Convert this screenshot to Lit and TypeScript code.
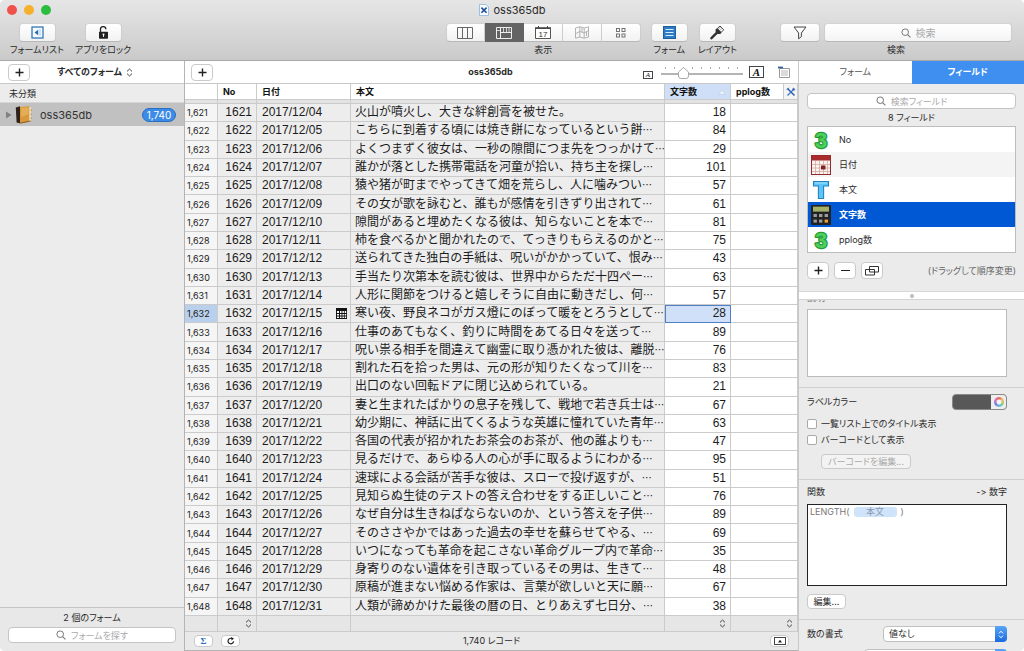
import { LitElement, html, css, svg, nothing } from "lit";
import { customElement, state } from "lit/decorators.js";
import { classMap } from "lit/directives/class-map.js";

type Row = { no: number; date: string; text: string; count: number };

const ENTRIES: [string, number][] = [
  ["火山が噴火し、大きな絆創膏を被せた。", 18],
  ["こちらに到着する頃には焼き餅になっているという餅…", 84],
  ["よくつまずく彼女は、一秒の隙間につま先をつっかけて…", 29],
  ["誰かが落とした携帯電話を河童が拾い、持ち主を探し…", 101],
  ["猿や猪が町までやってきて畑を荒らし、人に噛みつい…", 57],
  ["その女が歌を詠むと、誰もが感情を引きずり出されて…", 61],
  ["隙間があると埋めたくなる彼は、知らないことを本で…", 81],
  ["柿を食べるかと聞かれたので、てっきりもらえるのかと…", 75],
  ["送られてきた独白の手紙は、呪いがかかっていて、恨み…", 43],
  ["手当たり次第本を読む彼は、世界中からただ十四ペー…", 63],
  ["人形に関節をつけると嬉しそうに自由に動きだし、何…", 57],
  ["寒い夜、野良ネコがガス燈にのぼって暖をとろうとして…", 28],
  ["仕事のあてもなく、釣りに時間をあてる日々を送って…", 89],
  ["呪い祟る相手を間違えて幽霊に取り憑かれた彼は、離脱…", 76],
  ["割れた石を拾った男は、元の形が知りたくなって川を…", 83],
  ["出口のない回転ドアに閉じ込められている。", 21],
  ["妻と生まれたばかりの息子を残して、戦地で若き兵士は…", 67],
  ["幼少期に、神話に出てくるような英雄に憧れていた青年…", 63],
  ["各国の代表が招かれたお茶会のお茶が、他の誰よりも…", 47],
  ["見るだけで、あらゆる人の心が手に取るようにわかる…", 95],
  ["速球による会話が苦手な彼は、スローで投げ返すが、…", 51],
  ["見知らぬ生徒のテストの答え合わせをする正しいこと…", 76],
  ["なぜ自分は生きねばならないのか、という答えを子供…", 89],
  ["そのささやかではあった過去の幸せを蘇らせてやる、…", 69],
  ["いつになっても革命を起こさない革命グループ内で革命…", 35],
  ["身寄りのない遺体を引き取っているその男は、生きて…", 48],
  ["原稿が進まない悩める作家は、言葉が欲しいと天に願…", 67],
  ["人類が諦めかけた最後の暦の日、とりあえず七日分、…", 38],
];

const ROWS: Row[] = ENTRIES.map(([text, count], i) => ({
  no: 1621 + i,
  date: `2017/12/${String(4 + i).padStart(2, "0")}`,
  text,
  count,
}));

const searchIcon = html`<svg class="lens" width="10" height="10" viewBox="0 0 10 10" aria-hidden="true">
  <circle cx="4.2" cy="4.2" r="3.3" fill="none" stroke="#777" stroke-width="1"/>
  <path d="M6.6 6.6L9.4 9.4" stroke="#777" stroke-width="1.1"/></svg>`;

const updown = html`<svg width="7" height="9" viewBox="0 0 7 9" aria-hidden="true">
  <path d="M1 3.4L3.5 1L6 3.4M1 5.6L3.5 8L6 5.6" fill="none" stroke="#444" stroke-width="1"/></svg>`;

const plus = html`<svg width="9" height="9" viewBox="0 0 9 9" aria-hidden="true">
  <path d="M4.5 0.5V8.5M0.5 4.5H8.5" stroke="#222" stroke-width="1.4"/></svg>`;

const icons = {
  formList: html`<svg width="13" height="13" viewBox="0 0 13 13"><rect x="1" y="1" width="11" height="11" fill="#f4faff" stroke="#3577b5" stroke-width="1.3"/><path d="M3.5 6.5L7.2 3.8V9.2Z" fill="#2a68a8"/><path d="M9 3V10" stroke="#b8d8f2" stroke-width="1.4"/></svg>`,
  lock: html`<svg width="11" height="14" viewBox="0 0 11 14"><path d="M2.5 6V3.6A2.7 2.7 0 0 1 7.9 3.2" fill="none" stroke="#222" stroke-width="1.3"/><rect x="1" y="5.8" width="9" height="7" rx="0.8" fill="#222"/><circle cx="5.5" cy="8.6" r="1" fill="#fff"/><path d="M5.5 8.6V11" stroke="#fff" stroke-width="0.9"/></svg>`,
  columns: html`<svg width="16" height="12" viewBox="0 0 16 12"><path d="M0.5 0.5H15.5V11.5H0.5ZM5.5 0.5V11.5M10.5 0.5V11.5" fill="none" stroke="#666"/></svg>`,
  sheet: html`<svg width="16" height="12" viewBox="0 0 16 12"><path d="M0.5 0.5H15.5V11.5H0.5ZM4.5 0.5V11.5M4.5 5.5H15.5" fill="none" stroke="#eee"/><path d="M7.5 1V5M10.5 1V5M13 1V5M1 3.5H4" stroke="#ddd" stroke-width="0.9"/></svg>`,
  calendar: html`<svg width="16" height="13" viewBox="0 0 16 13"><path d="M0.5 2.5H15.5V12.5H0.5Z" fill="#fff" stroke="#555"/><path d="M0 2H16" stroke="#444" stroke-width="1.6"/><path d="M3.5 0V2M12.5 0V2" stroke="#444"/><text x="8" y="10.8" text-anchor="middle" font-size="8" font-family="Liberation Sans, sans-serif" fill="#333">17</text></svg>`,
  map: html`<svg width="14" height="13" viewBox="0 0 14 13"><path d="M0.5 2L4.8 0.8L9.2 2L13.5 0.8V11L9.2 12.2L4.8 11L0.5 12.2ZM4.8 0.8V11M9.2 2V12.2M1 7.5L4.8 5.5L9.2 7L13.5 4.5M7 2V6M11.5 5.5V10" fill="none" stroke="#aaa" stroke-width="0.9"/></svg>`,
  grid: html`<svg width="10" height="10" viewBox="0 0 10 10"><g fill="none" stroke="#666" stroke-width="0.9"><rect x="0.5" y="0.5" width="3" height="3"/><rect x="6" y="0.5" width="3" height="3"/><rect x="0.5" y="6" width="3" height="3"/><rect x="6" y="6" width="3" height="3"/></g></svg>`,
  form: html`<svg width="13" height="13" viewBox="0 0 13 13"><rect x="0.5" y="0.5" width="12" height="12" fill="#2d7cc4" stroke="#1f5f9e"/><path d="M2.5 3.5H10.5M2.5 6.5H10.5M2.5 9.5H10.5" stroke="#d9ecfb" stroke-width="1.1"/></svg>`,
  brush: html`<svg width="16" height="15" viewBox="0 0 16 15"><path d="M8.2 3.6L11 1L14.8 4.8L12 7.4Z" fill="#fff" stroke="#333" stroke-width="0.9"/><path d="M12 2L13 3M13.2 3.2L11 5.4M11.8 1.8L9.6 4" stroke="#555" stroke-width="0.6"/><path d="M6.6 4.2L8.2 3.2L12.4 7.4L11.4 9L8.4 9L3 14.2C1.8 14.8 0.8 13.8 1.4 12.6L6.6 7.2Z" fill="#333"/></svg>`,
  funnel: html`<svg width="14" height="14" viewBox="0 0 14 14"><path d="M1 1H13L8.4 7V10.6L5.6 12.8V7Z" fill="none" stroke="#444" stroke-width="1"/></svg>`,
  doc: html`<svg width="10" height="12" viewBox="0 0 10 12"><path d="M0.5 0.5H7L9.5 3V11.5H0.5Z" fill="#f7fbff" stroke="#9dbfe0"/><path d="M2.4 3.6L7.6 8.8M7.6 3.6L2.4 8.8" stroke="#1e4e94" stroke-width="1.6"/></svg>`,
  note: html`<svg width="13" height="12" viewBox="0 0 13 12"><path d="M2.5 2.5H12.5V11.5H2.5Z" fill="#fff" stroke="#999"/><path d="M1 1.5H6" stroke="#35629c" stroke-width="1.8"/><path d="M4 5H11M4 7H11M4 9H11" stroke="#999" stroke-width="0.7"/></svg>`,
  tools: html`<svg width="10" height="10" viewBox="0 0 10 10"><path d="M1.5 1.5L8.5 8.5" stroke="#2d5fae" stroke-width="1.5"/><path d="M8.5 1.5L1.5 8.5" stroke="#3f74c4" stroke-width="1.3"/><path d="M0.8 2.8L2.8 0.8M7.2 0.8L7 3L9.2 2.8" stroke="#2d5fae" fill="none"/></svg>`,
  book: html`<svg width="18" height="20" viewBox="0 0 18 20"><path d="M3 2.2L14.5 1V16.5L4.6 18.6L2.4 17Z" fill="#d9993a"/><path d="M0.8 2.4L5 1.2V18.2L1.6 17.4Z" fill="#2e2018"/><path d="M14.5 1.8L15.8 2.4V16L14.5 16.5Z" fill="#f2ead6"/><path d="M5 18.2L14.5 16.2L15.8 16" stroke="#8b5a1c" fill="none"/><path d="M6.2 3L13.5 2.2V9L6.2 12Z" fill="#e9b660" opacity="0.7"/><path d="M16.2 4.5V6M16.2 8.5V10M16.2 12.5V14" stroke="#d0962f" stroke-width="1.2"/></svg>`,
  minical: html`<svg class="minical" width="11" height="11" viewBox="0 0 11 11"><rect width="11" height="11" fill="#111"/><g fill="#fff"><path d="M1 3h2v2h-2zM4 3h1.5v2H4zM6.4 3h1.5v2H6.4zM8.7 3h1.5v2H8.7zM1 6h2v1.6H1zM4 6h1.5v1.6H4zM6.4 6h1.5v1.6H6.4zM8.7 6h1.5v1.6H8.7zM1 8.5h2V10H1zM4 8.5h1.5V10H4zM6.4 8.5h1.5V10H6.4zM8.7 8.5h1.5V10H8.7z"/></g></svg>`,
  number: html`<svg width="20" height="22" viewBox="0 0 20 22"><text x="10" y="18.5" text-anchor="middle" font-family="Liberation Sans, sans-serif" font-weight="bold" font-size="22" fill="#4fd05a" stroke="#229a3a" stroke-width="2.4" stroke-linejoin="round" paint-order="stroke">3</text></svg>`,
  date: html`<svg width="20" height="20" viewBox="0 0 20 20"><rect x="0.5" y="0.5" width="19" height="19" fill="#fbf1ee" stroke="#8e2a2a"/><rect x="0.5" y="0.5" width="19" height="5" fill="#a82c2c"/><path d="M4.5 6V19M8.5 6V19M12.5 6V19M16.5 6V19M1 9.5H19M1 13H19M1 16.5H19" stroke="#cfa9a0" stroke-width="0.8"/><rect x="10" y="10.5" width="4.5" height="4" fill="#7e2323"/></svg>`,
  text: html`<svg width="18" height="20" viewBox="0 0 18 20"><path d="M1.5 1.5H16.5V6H11.6V18.5H6.4V6H1.5Z" fill="#5cc4f6" stroke="#2384bd" stroke-width="1.1"/><path d="M3 3H15" stroke="#a5e2ff"/></svg>`,
  calc: html`<svg width="20" height="20" viewBox="0 0 20 20"><rect width="20" height="20" rx="1" fill="#222"/><rect x="2" y="1.6" width="16" height="5" fill="#a3b168"/><g fill="#9b9b9b"><rect x="2.5" y="9" width="3.4" height="3"/><rect x="8" y="9" width="3.4" height="3"/><rect x="13.6" y="9" width="3.4" height="3"/><rect x="2.5" y="14.6" width="3.4" height="3"/><rect x="8" y="14.6" width="3.4" height="3"/></g><rect x="13.6" y="14.6" width="3.4" height="3" fill="#f0a236"/></svg>`,
  copy: html`<svg width="14" height="10" viewBox="0 0 14 10"><path d="M4.5 0.5H13.5V6H4.5ZM0.5 3.5H9.5V9H0.5Z" fill="none" stroke="#333"/></svg>`,
  reload: html`<svg width="8" height="8" viewBox="0 0 8 8"><path d="M6.6 4.4A2.8 2.8 0 1 1 5 1.5" fill="none" stroke="#222" stroke-width="1.2"/><path d="M4 0L7 1.4L4.6 3.4Z" fill="#222"/></svg>`,
  panel: html`<svg width="12" height="8" viewBox="0 0 12 8"><rect x="0.5" y="0.5" width="11" height="7" fill="#fff" stroke="#444"/><path d="M4 5.4L6 2.8L8 5.4Z" fill="#222"/></svg>`,
};

const letterBox = (w: number, h: number, size: number) => html`<svg width=${w} height=${h} viewBox="0 0 ${w} ${h}" aria-hidden="true">
  ${svg`<rect x="0.5" y="0.5" width=${w - 1} height=${h - 1} fill="#fff" stroke="#444"/>
  <text x=${w / 2} y=${h / 2 + size / 3} text-anchor="middle" font-family="Liberation Serif, serif" font-style="italic" font-weight=${size > 8 ? "bold" : "normal"} font-size=${size} fill="#111">A</text>`}</svg>`;

const shared = css`
  :host { font-family: Inter, "Noto Sans CJK JP", sans-serif; font-size: 9px; line-height: 12px; color: #2a2a2a; font-feature-settings: "palt", "calt" 0; }
  * { box-sizing: border-box; }
  svg { display: block; flex: none; }
  button, input, select, textarea { font: inherit; color: inherit; font-feature-settings: inherit; margin: 0; }
  button { display: flex; align-items: center; justify-content: center; padding: 0; border: 1px solid #cacaca; border-radius: 4px; background: #fff; }
  .add { width: 22px; height: 17px; }
  .search { display: flex; align-items: center; justify-content: center; gap: 5px; background: #fff; border: 1px solid #c4c4c4; border-radius: 4px; }
  .search input { field-sizing: content; border: 0; padding: 0; background: none; outline: none; height: 12px; }
  .search input::placeholder { color: #aaa; opacity: 1; }
`;

@customElement("tool-bar")
class ToolBar extends LitElement {
  static styles = [shared, css`
    :host { display: block; height: 60px; background: linear-gradient(#e6e6e6, #cacaca); border-bottom: 1px solid #a8a8a8; }
    .title { display: grid; grid-template-columns: 1fr auto 1fr; align-items: center; height: 19px; padding: 0 7px; }
    .lights { display: flex; gap: 7px; }
    .light { width: 10px; height: 10px; border-radius: 50%; }
    .red { background: #f0524b; } .yellow { background: #f5b02e; } .green { background: #2bbd3d; }
    .name { display: flex; gap: 5px; align-items: center; font-size: 11px; }
    .items { display: flex; padding: 4px 12px 0 8px; }
    .item { display: flex; flex-direction: column; align-items: center; gap: 2px; }
    .left { display: flex; gap: 8px; }
    .left .item { min-width: 58px; }
    .middle { display: flex; gap: 10px; margin-left: auto; }
    .right { margin-left: 43px; }
    button { width: 37px; height: 19px; border-color: #d4d4d4 #cdcdcd #b8b8b8; background: linear-gradient(#fff, #f2f2f2); }
    .segments { display: flex; }
    .segments button { width: 39px; border-radius: 0; border-left-width: 0; }
    .segments button:first-child { border-radius: 4px 0 0 4px; border-left-width: 1px; }
    .segments button:last-child { border-radius: 0 4px 4px 0; }
    .segments .on { background: #636363; border-color: #636363; }
    .find { display: flex; gap: 4px; }
    .find button { width: 40px; }
    .find .search { width: 188px; height: 19px; border-color: #d4d4d4 #cdcdcd #b8b8b8; background: linear-gradient(#fff, #f4f4f4); }
    .find input { font-size: 10px; height: 14px; }
  `];
  render() {
    return html`
      <div class="title">
        <div class="lights"><span class="light red"></span><span class="light yellow"></span><span class="light green"></span></div>
        <div class="name">${icons.doc}<span>oss365db</span></div>
      </div>
      <div class="items">
        <div class="left">
          <div class="item"><button aria-labelledby="l1">${icons.formList}</button><span id="l1">フォームリスト</span></div>
          <div class="item"><button aria-labelledby="l2">${icons.lock}</button><span id="l2">アプリをロック</span></div>
        </div>
        <div class="middle">
          <div class="item">
            <div class="segments" role="group" aria-labelledby="l3">
              <button aria-label="columns">${icons.columns}</button><button class="on" aria-label="sheet">${icons.sheet}</button>
              <button aria-label="calendar">${icons.calendar}</button><button aria-label="map">${icons.map}</button><button aria-label="grid">${icons.grid}</button>
            </div><span id="l3">表示</span></div>
          <div class="item"><button aria-labelledby="l4">${icons.form}</button><span id="l4">フォーム</span></div>
          <div class="item"><button aria-labelledby="l5">${icons.brush}</button><span id="l5">レイアウト</span></div>
        </div>
        <div class="item right">
          <div class="find"><button aria-label="filter">${icons.funnel}</button>
            <div class="search">${searchIcon}<input id="q" type="text" placeholder="検索"></div></div>
          <label for="q">検索</label>
        </div>
      </div>`;
  }
}

@customElement("form-list")
class FormList extends LitElement {
  static styles = [shared, css`
    :host { display: flex; flex-direction: column; background: #ececec; border-right: 1px solid #b4b4b4; }
    .head { display: flex; align-items: center; height: 23px; padding: 0 8px; background: #fff; border-bottom: 1px solid #c8c8c8; }
    .scope { margin: 0 auto; gap: 4px; border: 0; font-weight: bold; background: none; padding-right: 16px; }
    .group { padding: 4px 9px 2px; height: 19px; border-bottom: 1px solid #d6d6d6; }
    .entry { display: flex; align-items: center; height: 23px; padding: 0 8px 0 6px; background: #c1c1c1; font-size: 11px; color: #333; }
    .entry svg { margin-right: 3px; }
    .entry .label { margin-left: 4px; }
    .badge { margin-left: auto; width: 34px; text-align: center; color: #fff; background: #3c8be6; border: 1px solid #2a6fc0; border-radius: 8px; font-size: 10px; line-height: 12px; }
    .foot { margin-top: auto; border-top: 1px solid #c4c4c4; background: #e8e8e8; padding: 4px 8px 8px; text-align: center; height: 44px; display: flex; flex-direction: column; gap: 3px; }
    .foot .search { height: 16px; flex: none; }
  `];
  render() {
    return html`
      <div class="head"><button class="add" aria-label="add">${plus}</button><button class="scope">すべてのフォーム ${updown}</button></div>
      <div class="group">未分類</div>
      <div class="entry"><svg width="6" height="8" viewBox="0 0 6 8"><path d="M0 0.5L5.5 4L0 7.5Z" fill="#808080"/></svg>${icons.book}<span class="label">oss365db</span><span class="badge">1,740</span></div>
      <div class="foot"><span>2 個のフォーム</span><div class="search">${searchIcon}<input type="text" aria-label="フォームを探す" placeholder="フォームを探す"></div></div>`;
  }
}

@customElement("record-sheet")
class RecordSheet extends LitElement {
  static styles = [shared, css`
    :host { display: flex; flex-direction: column; min-width: 0; background: #e9e9e9; }
    .head { display: grid; grid-template-columns: 1fr auto 1fr; align-items: center; height: 23px; padding: 0 8px 0 6px; background: #fff; border-bottom: 1px solid #c8c8c8; }
    .head b { font-size: 9px; }
    .zoom { display: flex; justify-content: flex-end; align-items: center; }
    .zoom > svg:last-child { margin-left: 13px; }
    .small { align-self: flex-end; }
    input[type="range"] { appearance: none; width: 82px; height: 14px; margin: 0 6px 0 8px; outline: none;
      background: linear-gradient(#b4b4b4, #b4b4b4) 0 8px / 100% 2px no-repeat, repeating-linear-gradient(90deg, transparent 0 4px, #aaa 4px 5px, transparent 5px 9px) 0 2px / 100% 2px no-repeat; }
    input[type="range"]::-webkit-slider-thumb { appearance: none; width: 11px; height: 13px;
      background: url("data:image/svg+xml,%3Csvg xmlns='http://www.w3.org/2000/svg' width='11' height='13'%3E%3Cpath d='M5.5 1.5L10.5 6V10Q10.5 12.5 8 12.5H3Q.5 12.5 .5 10V6Z' fill='white' stroke='%23aaa'/%3E%3C/svg%3E"); }
    .area { flex: 1; min-height: 0; }
    table { width: 100%; height: 100%; table-layout: fixed; border-collapse: separate; border-spacing: 0; }
    th, td { padding: 0; border-right: 1px solid #cbcbcb; border-bottom: 1px solid #cbcbcb; white-space: nowrap; overflow: hidden; text-align: left; }
    th { height: 16px; line-height: 14px; background: #fff; padding-left: 5px; color: #111; }
    th.sorted { background: #cfdff7; }
    th .cell { display: flex; align-items: center; justify-content: space-between; height: 15px; }
    .tool { width: 14px; height: 15px; border-radius: 0; border-width: 0 0 0 1px; background: #f4f4f4; }
    .gap td { height: 4px; background: #e3e3e3; line-height: 1px; }
    tbody td { font-family: "Liberation Sans", "Noto Sans CJK JP", sans-serif; font-size: 12px; line-height: 17px; background: #ededed; font-feature-settings: normal; color: #1c1c1c; }
    tbody .idx { font-family: Inter, sans-serif; font-size: 9px; padding-left: 2px; background: #f5f5f5; }
    tbody .no, tbody .num { text-align: right; padding-right: 4px; }
    tbody .num, tbody .blank { background: #fff; }
    tbody .date { padding-left: 5px; }
    .date .cell { display: flex; justify-content: space-between; align-items: center; padding-right: 3px; }
    tbody .body { padding-left: 4px; }
    .more { font-size: 10px; font-family: "Noto Sans CJK JP", sans-serif; line-height: 1; }
    tbody .on .idx { background: #b9d0ed; }
    tbody .on .num { background: #cfe0f8; outline: 1px solid #4f7fc4; outline-offset: -1px; }
    tfoot td { height: 16px; background: #e6e6e6; }
    tfoot svg { margin: 0 4px 0 auto; }
    .foot { display: grid; grid-template-columns: 1fr auto 1fr; align-items: center; height: 19px; padding: 0 9px; border-bottom: 1px solid #b4b4b4; }
    .foot button { width: 19px; height: 12px; }
    .acts { display: flex; gap: 8px; }
    .foot .sum { color: #2d6fc0; font: bold 9px "Liberation Serif", serif; }
    .foot .show { justify-self: end; }
  `];
  @state() private selected = 1632;
  render() {
    return html`
      <div class="head">
        <button class="add" aria-label="add">${plus}</button><b>oss365db</b>
        <div class="zoom"><span class="small">${letterBox(10, 8, 7)}</span><input type="range" aria-label="zoom" min="0" max="100" value="24">${letterBox(15, 12, 11)}${icons.note}</div>
      </div>
      <div class="area"><table>
        <colgroup><col style="width:33px"><col style="width:39px"><col style="width:94px"><col><col style="width:66px"><col style="width:67px"></colgroup>
        <thead>
          <tr><th></th><th>No</th><th>日付</th><th>本文</th>
            <th class="sorted"><div class="cell">文字数<svg width="12" height="6" viewBox="0 0 12 6"><path d="M4 0.5L7.5 5.5H0.5Z" fill="#e9f0fb" stroke="#b9c9e4" stroke-width="0.6"/></svg></div></th>
            <th><div class="cell">pplog数<button class="tool" aria-label="tools">${icons.tools}</button></div></th></tr>
          <tr class="gap"><td></td><td></td><td></td><td></td><td></td><td></td></tr>
        </thead>
        <tbody>${ROWS.map((r) => {
          const on = r.no === this.selected;
          const cut = r.text.endsWith("…");
          return html`<tr class=${classMap({ on })} @click=${() => (this.selected = r.no)}>
            <td class="idx">${r.no.toLocaleString("en-US")}</td><td class="no">${r.no}</td>
            <td class="date"><div class="cell">${r.date}${on ? icons.minical : nothing}</div></td>
            <td class="body">${cut ? html`${r.text.slice(0, -1)}<span class="more">…</span>` : r.text}</td>
            <td class="num">${r.count}</td><td class="blank"></td></tr>`;
        })}</tbody>
        <tfoot><tr><td></td><td>${updown}</td><td></td><td></td><td>${updown}</td><td>${updown}</td></tr></tfoot>
      </table></div>
      <div class="foot"><div class="acts"><button class="sum">Σ</button><button aria-label="reload">${icons.reload}</button></div>
        <span>1,740 レコード</span><button class="show" aria-label="panel">${icons.panel}</button></div>`;
  }
}

@customElement("field-inspector")
class FieldInspector extends LitElement {
  static styles = [shared, css`
    :host { display: flex; flex-direction: column; background: #ebebeb; border-left: 1px solid #c8c8c8; }
    .tabs { display: grid; grid-template-columns: 1fr 1fr; height: 23px; flex: none; }
    .tabs button { border: 0; border-radius: 0; border-bottom: 1px solid #c8c8c8; color: #555; }
    .tabs .on { background: #3e8ff0; color: #fff; border-color: #3e8ff0; font-weight: bold; }
    .top { display: flex; flex-direction: column; padding: 9px 8px 0; height: 207px; flex: none; }
    .top .search { height: 16px; flex: none; }
    .total { text-align: center; padding: 3px 0 2px; flex: none; }
    ul { list-style: none; margin: 0; padding: 0; border: 1px solid #bdbdbd; background: #fff; }
    li { display: flex; align-items: center; height: 25px; padding-left: 3px; }
    li:nth-child(even) { background: #f4f4f4; }
    li.on { background: #0058d4; color: #fff; font-weight: bold; }
    .glyph { width: 20px; margin-right: 8px; display: flex; justify-content: center; }
    .row { display: flex; align-items: center; }
    .acts { gap: 5px; padding-top: 9px; }
    .acts button { width: 22px; height: 17px; }
    .hint { margin-left: auto; color: #666; }
    .split { height: 9px; flex: none; display: flex; align-items: center; justify-content: center; background: #fff; border-bottom: 1px solid #d4d4d4; border-top: 1px solid #d8d8d8; }
    .knob { width: 4px; height: 4px; border-radius: 50%; background: #ddd; border: 1px solid #aaa; }
    .pane { flex: 1; min-height: 0; overflow: hidden; }
    section { padding: 6px 17px 10px 8px; border-bottom: 1px solid #cfcfcf; }
    .first { padding-top: 0; }
    .first label { display: block; margin-top: -8px; margin-bottom: 5px; color: #777; }
    textarea { display: block; width: 100%; height: 68px; border: 1px solid #bbb; background: #fff; resize: none; }
    .between { justify-content: space-between; }
    .well { width: 55px; height: 16px; border-color: #8a8a8a; background: #585858; justify-content: flex-end; overflow: hidden; padding: 0; }
    .wheel { width: 15px; height: 14px; background: #eee; display: flex; align-items: center; justify-content: center; }
    .ring { width: 10px; height: 10px; border-radius: 50%; background: radial-gradient(#f4f4f4 0 2px, transparent 3px), conic-gradient(#e96a5c, #f0c25b, #8fd07c, #5fb8e8, #7c7ae0, #d873c4, #e96a5c); }
    .check { display: flex; align-items: center; gap: 4px; height: 16px; }
    .checks { padding-top: 6px; }
    .check input { appearance: none; width: 10px; height: 10px; border: 1px solid #aaa; border-radius: 2px; background: #fff; }
    .push { height: 15px; }
    .barcode { width: 90px; margin: 6px 0 0 14px; color: #aaa; background: #f3f3f3; }
    .formula { height: 82px; border: 1px solid #222; background: #fff; padding: 1px 2px; margin: 6px 0 8px; color: #777; display: flex; align-items: flex-start; gap: 4px; }
    .token { width: 43px; text-align: center; background: #cfe3fa; border-radius: 3px; line-height: 10px; margin-top: 1px; color: #8798ab; }
    .edit { width: 39px; }
    .pick { position: relative; width: 124px; }
    .pick.wide { width: 143px; }
    select { appearance: none; width: 100%; height: 16px; border: 1px solid #c0c0c0; border-radius: 4px; background: #fff; padding: 0 16px 0 5px; display: block; }
    .arrows { position: absolute; right: 0; top: 0; width: 12px; height: 16px; border-radius: 0 4px 4px 0; background: linear-gradient(#5aa5f6, #1a6be0); display: flex; align-items: center; justify-content: center; pointer-events: none; }
    .format { display: flex; flex-direction: column; gap: 7px; padding-bottom: 0; border: 0; }
  `];
  private fields = [
    { icon: icons.number, name: "No" },
    { icon: icons.date, name: "日付" },
    { icon: icons.text, name: "本文" },
    { icon: icons.calc, name: "文字数", on: true },
    { icon: icons.number, name: "pplog数" },
  ];
  private arrows = html`<span class="arrows"><svg width="6" height="9" viewBox="0 0 6 9"><path d="M1 3.4L3 1.2L5 3.4M1 5.6L3 7.8L5 5.6" fill="none" stroke="#fff"/></svg></span>`;
  render() {
    return html`
      <div class="tabs"><button>フォーム</button><button class="on">フィールド</button></div>
      <div class="top">
        <div class="search">${searchIcon}<input type="text" aria-label="検索フィールド" placeholder="検索フィールド"></div>
        <div class="total">8 フィールド</div>
        <ul>${this.fields.map((f) => html`<li class=${classMap({ on: !!f.on })}><span class="glyph">${f.icon}</span>${f.name}</li>`)}</ul>
        <div class="row acts"><button aria-label="add">${plus}</button>
          <button aria-label="remove"><svg width="9" height="9" viewBox="0 0 9 9"><path d="M0 4.5H9" stroke="#222"/></svg></button>
          <button aria-label="duplicate">${icons.copy}</button><span class="hint">(ドラッグして順序変更)</span></div>
      </div>
      <div class="split"><span class="knob"></span></div>
      <div class="pane">
        <section class="first"><label for="memo">説明</label><textarea id="memo"></textarea></section>
        <section>
          <div class="row between"><span id="color">ラベルカラー</span><button class="well" aria-labelledby="color"><span class="wheel"><span class="ring"></span></span></button></div>
          <div class="checks"><label class="check"><input type="checkbox">一覧リスト上でのタイトル表示</label>
          <label class="check"><input type="checkbox">バーコードとして表示</label></div>
          <button class="push barcode" disabled>バーコードを編集...</button>
        </section>
        <section>
          <div class="row between"><span>関数</span><span>-&gt; 数字</span></div>
          <div class="formula" role="textbox" aria-label="関数"><span>LENGTH(</span><span class="token">本文</span><span>)</span></div>
          <button class="push edit">編集...</button>
        </section>
        <section class="format">
          <div class="row between"><label for="fmt">数の書式</label><span class="pick"><select id="fmt"><option>値なし</option></select>${this.arrows}</span></div>
          <div class="row between"><span></span><span class="pick wide"><select aria-label="単位"><option></option></select>${this.arrows}</span></div>
        </section>
      </div>`;
  }
}

@customElement("app-root")
class AppRoot extends LitElement {
  static styles = css`
    :host { display: flex; flex-direction: column; height: 100vh; overflow: hidden; border-radius: 5px; background: #ececec; }
    .main { flex: 1; min-height: 0; display: grid; grid-template-columns: 185px minmax(0, 1fr) 226px; grid-template-rows: minmax(0, 1fr); }
  `;
  render() {
    return html`<tool-bar></tool-bar><div class="main"><form-list></form-list><record-sheet></record-sheet><field-inspector></field-inspector></div>`;
  }
}
